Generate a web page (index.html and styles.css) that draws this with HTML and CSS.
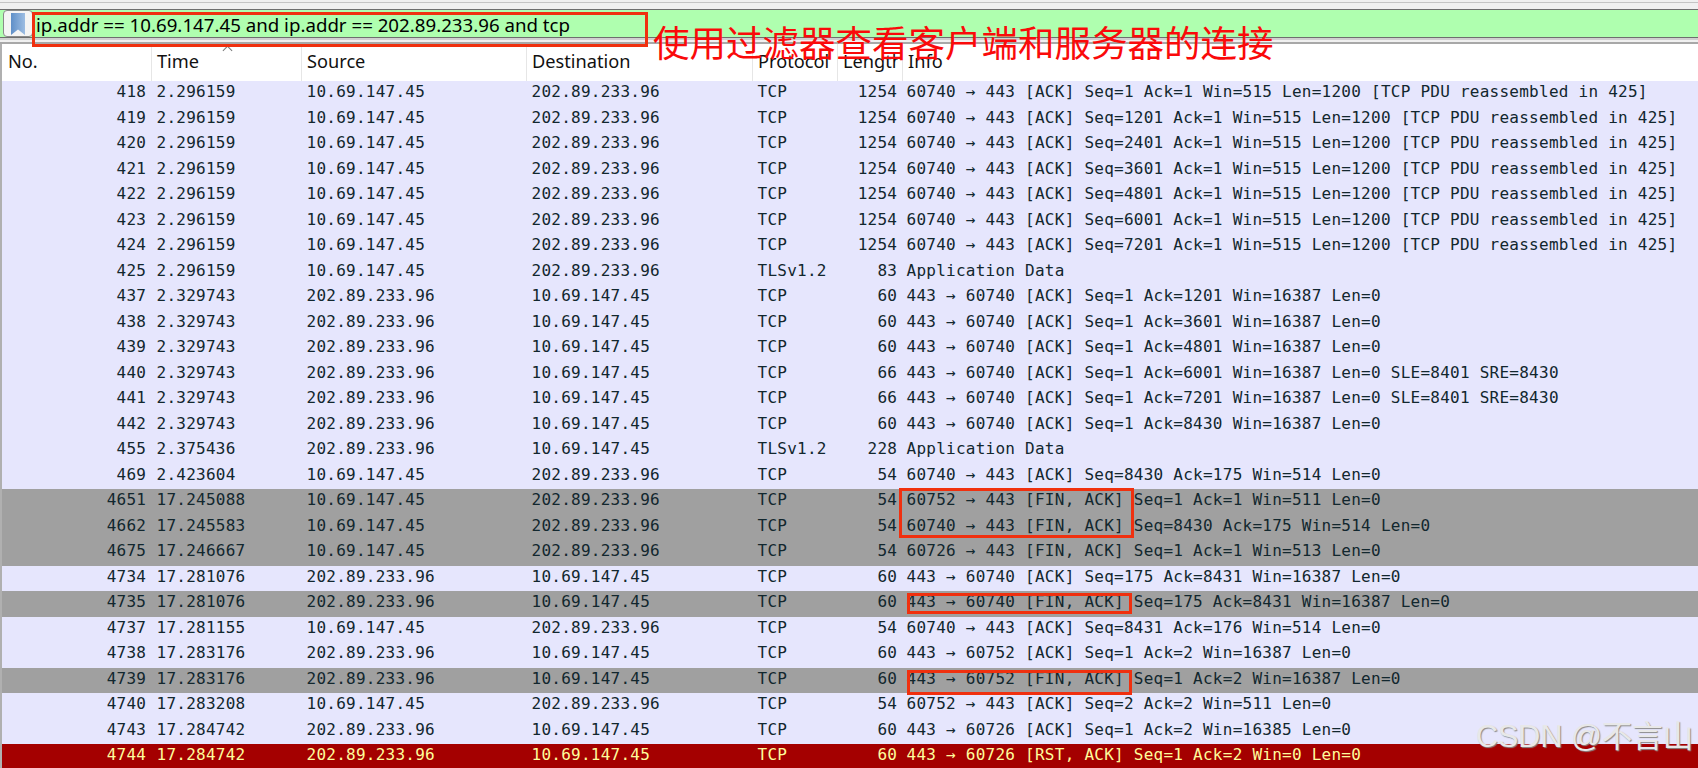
FILE: index.html
```html
<!DOCTYPE html>
<html lang="zh">
<head>
<meta charset="utf-8">
<title>Wireshark</title>
<link rel="stylesheet" href="styles.css">
</head>
<body>
<div class="app">
  <div class="topline"></div>
  <div class="filterbar">
    <div class="bookmark">
      <svg width="14" height="22" viewBox="0 0 14 22"><defs><linearGradient id="bm" x1="0" x2="1" y1="0" y2="0"><stop offset="0" stop-color="#5f8fc8"/><stop offset="1" stop-color="#9dbde2"/></linearGradient></defs><path d="M0 0H14V22L7 16.5L0 22Z" fill="url(#bm)"/></svg>
    </div>
    <div class="filtertext">ip.addr == 10.69.147.45 and ip.addr == 202.89.233.96 and tcp</div>
  </div>
  <div class="rules"></div>
  <div class="packets">
    <div class="row head"><span>No.</span><span>Time</span><span>Source</span><span>Destination</span><span>Protocol</span><span>Length</span><span>Info</span></div>
    <div class="row"><span>418</span><span>2.296159</span><span>10.69.147.45</span><span>202.89.233.96</span><span>TCP</span><span>1254</span><span>60740 → 443 [ACK] Seq=1 Ack=1 Win=515 Len=1200 [TCP PDU reassembled in 425]</span></div>
    <div class="row"><span>419</span><span>2.296159</span><span>10.69.147.45</span><span>202.89.233.96</span><span>TCP</span><span>1254</span><span>60740 → 443 [ACK] Seq=1201 Ack=1 Win=515 Len=1200 [TCP PDU reassembled in 425]</span></div>
    <div class="row"><span>420</span><span>2.296159</span><span>10.69.147.45</span><span>202.89.233.96</span><span>TCP</span><span>1254</span><span>60740 → 443 [ACK] Seq=2401 Ack=1 Win=515 Len=1200 [TCP PDU reassembled in 425]</span></div>
    <div class="row"><span>421</span><span>2.296159</span><span>10.69.147.45</span><span>202.89.233.96</span><span>TCP</span><span>1254</span><span>60740 → 443 [ACK] Seq=3601 Ack=1 Win=515 Len=1200 [TCP PDU reassembled in 425]</span></div>
    <div class="row"><span>422</span><span>2.296159</span><span>10.69.147.45</span><span>202.89.233.96</span><span>TCP</span><span>1254</span><span>60740 → 443 [ACK] Seq=4801 Ack=1 Win=515 Len=1200 [TCP PDU reassembled in 425]</span></div>
    <div class="row"><span>423</span><span>2.296159</span><span>10.69.147.45</span><span>202.89.233.96</span><span>TCP</span><span>1254</span><span>60740 → 443 [ACK] Seq=6001 Ack=1 Win=515 Len=1200 [TCP PDU reassembled in 425]</span></div>
    <div class="row"><span>424</span><span>2.296159</span><span>10.69.147.45</span><span>202.89.233.96</span><span>TCP</span><span>1254</span><span>60740 → 443 [ACK] Seq=7201 Ack=1 Win=515 Len=1200 [TCP PDU reassembled in 425]</span></div>
    <div class="row"><span>425</span><span>2.296159</span><span>10.69.147.45</span><span>202.89.233.96</span><span>TLSv1.2</span><span>83</span><span>Application Data</span></div>
    <div class="row"><span>437</span><span>2.329743</span><span>202.89.233.96</span><span>10.69.147.45</span><span>TCP</span><span>60</span><span>443 → 60740 [ACK] Seq=1 Ack=1201 Win=16387 Len=0</span></div>
    <div class="row"><span>438</span><span>2.329743</span><span>202.89.233.96</span><span>10.69.147.45</span><span>TCP</span><span>60</span><span>443 → 60740 [ACK] Seq=1 Ack=3601 Win=16387 Len=0</span></div>
    <div class="row"><span>439</span><span>2.329743</span><span>202.89.233.96</span><span>10.69.147.45</span><span>TCP</span><span>60</span><span>443 → 60740 [ACK] Seq=1 Ack=4801 Win=16387 Len=0</span></div>
    <div class="row"><span>440</span><span>2.329743</span><span>202.89.233.96</span><span>10.69.147.45</span><span>TCP</span><span>66</span><span>443 → 60740 [ACK] Seq=1 Ack=6001 Win=16387 Len=0 SLE=8401 SRE=8430</span></div>
    <div class="row"><span>441</span><span>2.329743</span><span>202.89.233.96</span><span>10.69.147.45</span><span>TCP</span><span>66</span><span>443 → 60740 [ACK] Seq=1 Ack=7201 Win=16387 Len=0 SLE=8401 SRE=8430</span></div>
    <div class="row"><span>442</span><span>2.329743</span><span>202.89.233.96</span><span>10.69.147.45</span><span>TCP</span><span>60</span><span>443 → 60740 [ACK] Seq=1 Ack=8430 Win=16387 Len=0</span></div>
    <div class="row"><span>455</span><span>2.375436</span><span>202.89.233.96</span><span>10.69.147.45</span><span>TLSv1.2</span><span>228</span><span>Application Data</span></div>
    <div class="row"><span>469</span><span>2.423604</span><span>10.69.147.45</span><span>202.89.233.96</span><span>TCP</span><span>54</span><span>60740 → 443 [ACK] Seq=8430 Ack=175 Win=514 Len=0</span></div>
    <div class="row fin"><span>4651</span><span>17.245088</span><span>10.69.147.45</span><span>202.89.233.96</span><span>TCP</span><span>54</span><span>60752 → 443 [FIN, ACK] Seq=1 Ack=1 Win=511 Len=0</span></div>
    <div class="row fin"><span>4662</span><span>17.245583</span><span>10.69.147.45</span><span>202.89.233.96</span><span>TCP</span><span>54</span><span>60740 → 443 [FIN, ACK] Seq=8430 Ack=175 Win=514 Len=0</span></div>
    <div class="row fin"><span>4675</span><span>17.246667</span><span>10.69.147.45</span><span>202.89.233.96</span><span>TCP</span><span>54</span><span>60726 → 443 [FIN, ACK] Seq=1 Ack=1 Win=513 Len=0</span></div>
    <div class="row"><span>4734</span><span>17.281076</span><span>202.89.233.96</span><span>10.69.147.45</span><span>TCP</span><span>60</span><span>443 → 60740 [ACK] Seq=175 Ack=8431 Win=16387 Len=0</span></div>
    <div class="row fin"><span>4735</span><span>17.281076</span><span>202.89.233.96</span><span>10.69.147.45</span><span>TCP</span><span>60</span><span>443 → 60740 [FIN, ACK] Seq=175 Ack=8431 Win=16387 Len=0</span></div>
    <div class="row"><span>4737</span><span>17.281155</span><span>10.69.147.45</span><span>202.89.233.96</span><span>TCP</span><span>54</span><span>60740 → 443 [ACK] Seq=8431 Ack=176 Win=514 Len=0</span></div>
    <div class="row"><span>4738</span><span>17.283176</span><span>202.89.233.96</span><span>10.69.147.45</span><span>TCP</span><span>60</span><span>443 → 60752 [ACK] Seq=1 Ack=2 Win=16387 Len=0</span></div>
    <div class="row fin"><span>4739</span><span>17.283176</span><span>202.89.233.96</span><span>10.69.147.45</span><span>TCP</span><span>60</span><span>443 → 60752 [FIN, ACK] Seq=1 Ack=2 Win=16387 Len=0</span></div>
    <div class="row"><span>4740</span><span>17.283208</span><span>10.69.147.45</span><span>202.89.233.96</span><span>TCP</span><span>54</span><span>60752 → 443 [ACK] Seq=2 Ack=2 Win=511 Len=0</span></div>
    <div class="row"><span>4743</span><span>17.284742</span><span>202.89.233.96</span><span>10.69.147.45</span><span>TCP</span><span>60</span><span>443 → 60726 [ACK] Seq=1 Ack=2 Win=16385 Len=0</span></div>
    <div class="row rst"><span>4744</span><span>17.284742</span><span>202.89.233.96</span><span>10.69.147.45</span><span>TCP</span><span>60</span><span>443 → 60726 [RST, ACK] Seq=1 Ack=2 Win=0 Len=0</span></div>
  </div>
  <div class="sort-caret"></div>
  <div class="mark mark-filter"></div>
  <div class="mark mark-fin1"></div>
  <div class="mark mark-fin2"></div>
  <div class="mark mark-fin3"></div>
  <div class="note">使用过滤器查看客户端和服务器的连接</div>
  <div class="watermark">CSDN @不言山</div>
</div>
</body>
</html>
```
FILE: styles.css
```css
* { box-sizing: border-box; }
html, body { margin: 0; padding: 0; background: #fff; overflow: hidden; }
.app { position: relative; width: 1698px; height: 768px; overflow: hidden; background: #fff; }

.topline { height: 9px; background: #f0f0f0; border-top: 2px solid #f0f0f0; position: relative; }
.topline::after { content: ""; position: absolute; left: 0; right: 0; top: 0; height: 1px; background: #c4c4c4; }

.filterbar { height: 29px; display: flex; align-items: stretch; background: #afffaf; border-top: 1px solid #6e6e6e; border-bottom: 1px solid #6e6e6e; }
.bookmark { width: 30px; flex: none; display: flex; align-items: center; justify-content: center; background: #f4f4f4; border: 1px solid #8a8a8a; border-radius: 4px; margin-left: 3px; }
.filtertext { font: 18.7px/29px "Noto Sans", "Liberation Sans", sans-serif; color: #000; padding-left: 3px; white-space: nowrap; }

.rules { height: 6px; background: #f0f0f0; border-top: 2px solid #d0d0d0; border-bottom: 2px solid #a8a8a8; }

.packets { display: grid; grid-template-rows: 37px; grid-auto-rows: 25.5px; border-left: 2px solid #b0b0b0; }
.row {
  display: grid;
  grid-template-columns: 149px 150px 225px 226px 85px 65px 1fr;
  background: #e6e6fd;
  color: #12272e;
  font: 16px/21px "DejaVu Sans Mono", "Liberation Mono", monospace;
  letter-spacing: 0.25px;
  white-space: nowrap;
}
.row span { padding-left: 5.5px; }
.row span:nth-child(1), .row span:nth-child(6) { text-align: right; padding: 0 5px 0 0; letter-spacing: 0.17px; }
.row span:nth-child(7) { padding-left: 4.5px; }
.row.fin { background: #a0a0a0; }
.row.rst { background: #a40000; color: #fffc9c; }

.row.head { height: 37px; background: #fff; color: #111; font: 18.2px/34px "Noto Sans", "Liberation Sans", sans-serif; letter-spacing: 0; }
.row.head span { padding: 0 0 0 6px; text-align: left; letter-spacing: 0; border-right: 4px solid #fff; overflow: hidden; box-shadow: 1px 0 0 #e6e6e6; }
.row.head span:last-child { border-right: 0; box-shadow: none; }

.sort-caret { position: absolute; left: 224px; top: 47px; width: 7px; height: 7px; border-left: 1px solid #777; border-top: 1px solid #777; transform: rotate(45deg); }

.mark { position: absolute; border: 3px solid #f0300f; }
.mark-filter { left: 32px; top: 12px; width: 616px; height: 35px; }
.mark-fin1 { left: 899px; top: 488px; width: 235px; height: 50px; }
.mark-fin2 { left: 907px; top: 593px; width: 225px; height: 21px; }
.mark-fin3 { left: 907px; top: 670px; width: 225px; height: 25px; }

.note { position: absolute; left: 653px; top: 18px; font: 36.5px/48px "Noto Sans CJK SC", sans-serif; color: #fa0a0a; white-space: nowrap; }
.watermark { position: absolute; left: 1476px; top: 716px; font: 30.5px/40px "Liberation Sans", "Noto Sans CJK SC", sans-serif; color: #e8e8e8; text-shadow: 1px 1px 1px #8a8a8a; white-space: nowrap; }
```
